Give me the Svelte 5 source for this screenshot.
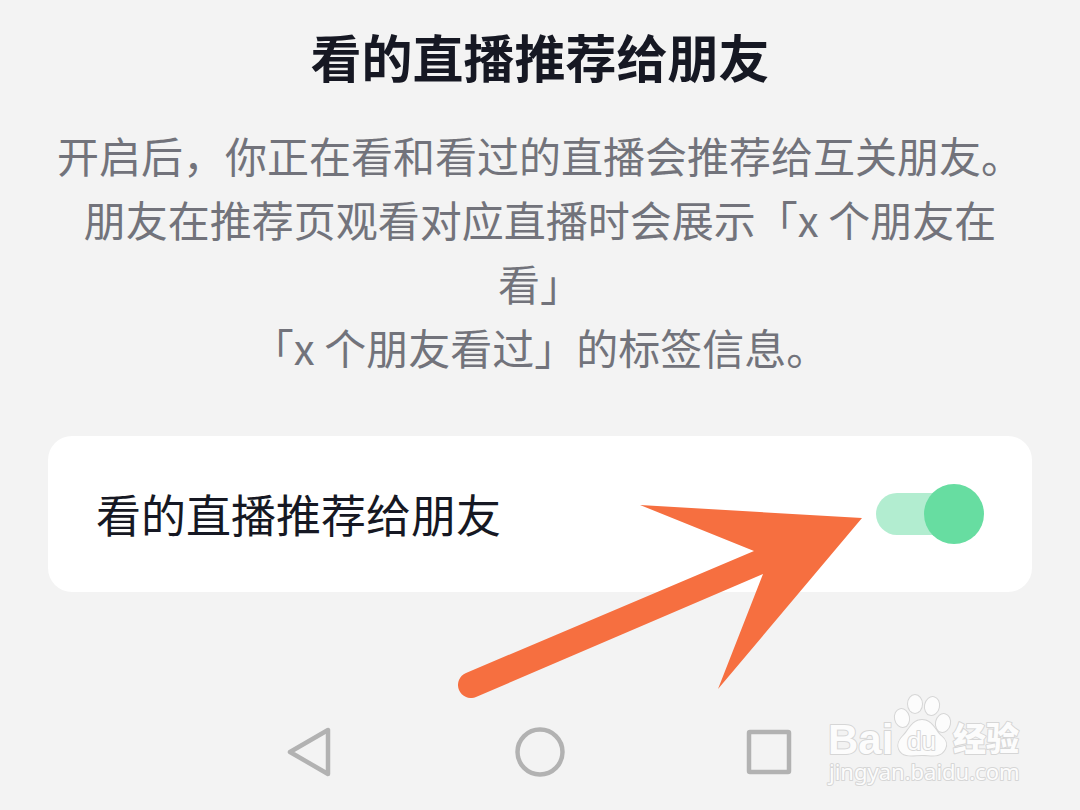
<script>
	let enabled = $state(true)
</script>


<div class="page">
	<main>
		<h1>看的直播推荐给朋友</h1>

		<p class="intro">
			开启后，你正在看和看过的直播会推荐给互关朋友。<br>朋友在推荐页观看对应直播时会展示「x 个朋友在看」<br>「x 个朋友看过」的标签信息。
		</p>

		<div class="card">
			<label for="recommend">看的直播推荐给朋友</label>
			<input id="recommend" class="switch" type="checkbox" role="switch" bind:checked={enabled}>

			<svg class="arrow" viewBox="0 0 404 194" aria-hidden="true">
				<path d="M8 169 L296 47 L182 1 L404 14 L260 185 L305 70 L18 193 A13 13 0 0 1 8 169 Z" />
			</svg>
		</div>
	</main>

	<nav>
		<button type="button" aria-label="返回">
			<svg viewBox="0 0 50 50"><path d="M43 3 V47 L5 25 Z" /></svg>
		</button>
		<button type="button" aria-label="主页">
			<svg viewBox="0 0 50 50"><circle cx="25" cy="25" r="22.500" /></svg>
		</button>
		<button type="button" aria-label="最近任务">
			<svg viewBox="0 0 50 50"><rect x="4" y="5" width="40" height="40" rx="1" /></svg>
		</button>
	</nav>

	<svg class="watermark" viewBox="0 0 206 100">
		<text class="latin" x="4" y="62" font-size="42">Bai</text>
		<g class="paw">
			<ellipse cx="78" cy="26" rx="7" ry="9" transform="rotate(-12 78 26)" />
			<ellipse cx="91" cy="12" rx="7" ry="9" />
			<ellipse cx="108" cy="14" rx="7" ry="9" transform="rotate(12 108 14)" />
			<ellipse cx="119" cy="31" rx="7" ry="9" transform="rotate(12 119 31)" />
			<path d="M98 28 C88 28 85 38 80 43 C75 48 73 52 75 57 C79 66 89 63 98 63 C108 63 116 66 121 57 C124 51 121 47 116 43 C111 38 108 28 98 28 Z" />
		</g>
		<text class="du" x="83" y="58" font-size="26">du</text>
		<text class="hanzi" x="129" y="59" font-size="33">经验</text>
		<text class="url" x="5" y="88" font-size="22">jingyan.baidu.com</text>
	</svg>
</div>


<style>

	:global(body) {
		margin: 0;

		background: #f3f3f3;
	}

	.page {
		position: relative;

		display: flex;
		flex-direction: column;
		justify-content: space-between;

		min-height: 100vh;
		padding: 24px 48px 33px;

		box-sizing: border-box;

		color: #161823;
		font-family: "Noto Sans CJK SC", sans-serif;
	}

	h1 {
		margin: 0;

		font-size: 51px;
		font-weight: 700;
		line-height: 64px;
		text-align: center;
	}

	.intro {
		margin: 35px 0 57px;

		color: #72737b;
		font-size: 42px;
		line-height: 64px;
		text-align: center;
	}

	.card {
		position: relative;

		display: flex;
		align-items: center;
		justify-content: space-between;

		padding: 48px;

		border-radius: 24px;
		background: #ffffff;
	}

	label {
		font-size: 45px;
		line-height: 60px;
	}

	.switch {
		position: relative;

		flex: none;

		width: 108px;
		height: 60px;
		margin: 0;

		appearance: none;

		cursor: pointer;
	}

	.switch::before, .switch::after {
		content: "";

		position: absolute;
	}

	.switch::before {
		top: 9px;
		left: 0;

		width: 96px;
		height: 42px;

		border-radius: 21px;
		background: #d0d1d3;
	}

	.switch::after {
		top: 0;
		left: 0;

		width: 60px;
		height: 60px;

		border-radius: 50%;
		background: #a0a1a5;
	}

	.switch:checked::before {
		background: #b2edd0;
	}

	.switch:checked::after {
		left: 48px;

		background: #67dda1;
	}

	.arrow {
		position: absolute;
		top: 68px;
		right: 170px;

		width: 404px;
		height: 194px;

		fill: #f66f40;

		pointer-events: none;
	}

	nav {
		display: flex;
		justify-content: center;
		gap: 180px;
	}

	button {
		width: 50px;
		height: 50px;
		padding: 0;

		border: none;
		background: none;

		cursor: pointer;
	}

	button svg {
		display: block;

		fill: none;
		stroke: #b2b2b2;
		stroke-width: 4.500;
		stroke-linejoin: round;
	}

	.watermark {
		position: absolute;
		right: 50px;
		bottom: 18px;

		width: 206px;
		height: 100px;

		overflow: visible;

		fill: #fcfcfc;
		stroke: #d6d6d6;
		stroke-width: 2;
		stroke-linejoin: round;
		paint-order: stroke;

		pointer-events: none;
	}

	.latin, .du {
		font-family: "Liberation Sans", sans-serif;
		font-weight: 700;
	}

	.du {
		font-weight: 400;
	}

	.hanzi {
		font-weight: 900;
	}

	.url {
		font-family: "Noto Sans", sans-serif;
	}

</style>
